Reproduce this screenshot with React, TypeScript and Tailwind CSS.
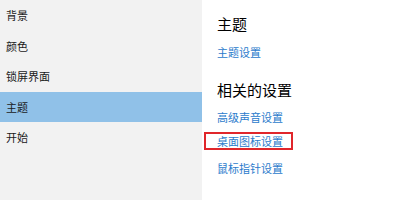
const navItems = ["背景", "颜色", "锁屏界面", "主题", "开始"];

const font = { fontFamily: '"Noto Sans CJK SC", "Noto Sans", sans-serif' };

export default function App() {
  return (
    <div className="flex h-[200px] w-[400px] overflow-hidden bg-white" style={font}>
      <div className="flex w-[202px] shrink-0 flex-col bg-[#f2f2f2]">
        {navItems.map((item) => (
          <div
            key={item}
            className={
              "flex h-[30.5px] items-center pl-[6px] text-[11px] text-[#1a1a1a] " +
              (item === "主题" ? "bg-[#90c1e8]" : "")
            }
          >
            {item}
          </div>
        ))}
      </div>
      <div className="flex flex-col pl-[15px]">
        <div className="mt-[14px] h-[20px] text-[15px] leading-[20px] text-black">主题</div>
        <div className="mt-[10px] h-[16px] text-[11px] leading-[16px] text-[#2b7bcc]">主题设置</div>
        <div className="mt-[20px] h-[20px] text-[15px] leading-[20px] text-black">相关的设置</div>
        <div className="mt-[9px] h-[16px] text-[11px] leading-[16px] text-[#2b7bcc]">高级声音设置</div>
        <div className="-ml-[13px] mt-[7px] flex h-[18px] w-[89px] items-center border-2 border-[#e0262b] pl-[11px] text-[11px] text-[#2b7bcc]">
          桌面图标设置
        </div>
        <div className="mt-[10px] h-[16px] text-[11px] leading-[16px] text-[#2b7bcc]">鼠标指针设置</div>
      </div>
    </div>
  );
}
